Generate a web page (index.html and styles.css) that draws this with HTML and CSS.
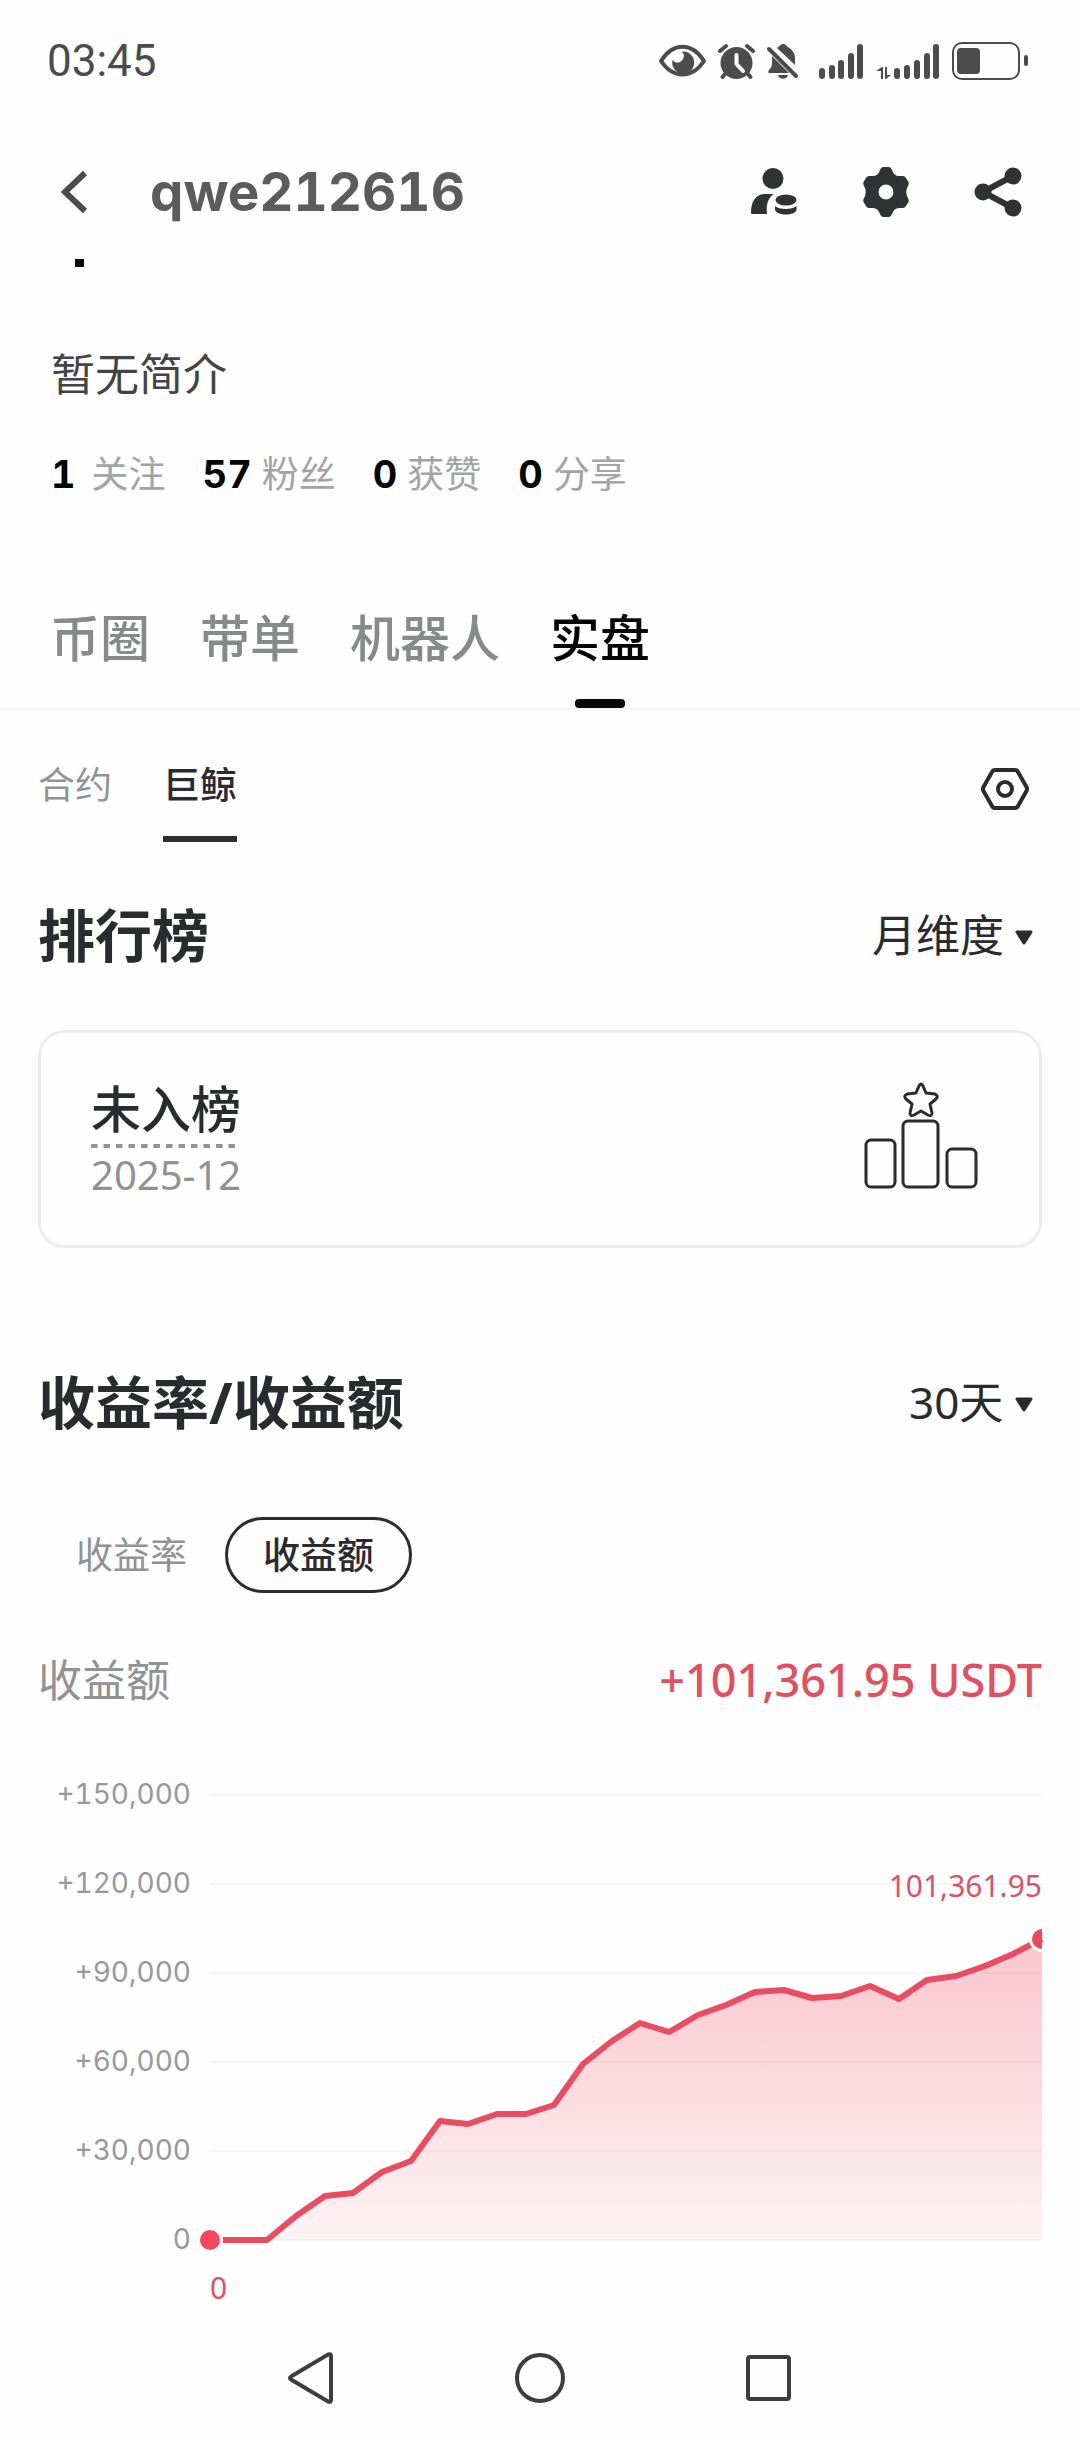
FILE: index.html
```html
<!DOCTYPE html>
<html lang="zh-CN">
<head>
<meta charset="utf-8">
<meta name="viewport" content="width=device-width, initial-scale=1">
<title>qwe212616</title>
<link rel="stylesheet" href="styles.css">
</head>
<body>
<div class="status-bar">
  <time class="clock">03:45</time>
  <div class="status-icons">
    <svg width="47" height="38" viewBox="0 0 47 38" aria-hidden="true">
      <path d="M2 19C14 0 33 0 45 19C33 37 14 37 2 19Z" fill="none" stroke="currentColor" stroke-width="4" stroke-linejoin="round"/>
      <path d="M24 9.500A11 11 0 1 1 13.500 18C16 21 20 21.500 22.500 19C25.500 16 26 12 22.500 10Z" fill="currentColor"/>
    </svg>
    <svg width="37" height="38" viewBox="0 0 37 38" aria-hidden="true">
      <circle cx="18.500" cy="21" r="16" fill="currentColor"/>
      <path d="M2 9L8 4M35 9L29 4" stroke="currentColor" stroke-width="4" stroke-linecap="round"/>
      <path d="M7 32L4.500 35M30 32L32.500 35" stroke="currentColor" stroke-width="4" stroke-linecap="round"/>
      <path d="M18.500 13V22L25 29" fill="none" stroke="#fff" stroke-width="4" stroke-linecap="round" stroke-linejoin="round"/>
    </svg>
    <svg width="32" height="38" viewBox="0 0 32 38" aria-hidden="true">
      <path d="M5 14L22 31H2C1 31 1 29 2 28C4 26 5 24 5 20Z" fill="currentColor"/>
      <path d="M11 5C13 5 13 2 16 2C19 2 19 4 21 5C26 8 28 12 28 16V23L10 6Z" fill="currentColor"/>
      <path d="M2 7L29 34" stroke="currentColor" stroke-width="4" stroke-linecap="round"/>
      <path d="M11 33H21C20 38 12 38 11 33Z" fill="currentColor"/>
    </svg>
    <svg class="signal" width="44" height="38" viewBox="0 0 44 38" aria-hidden="true">
      <path d="M3 29V34M13 26V34M22 21V34M32 14V34M41 5V34" stroke="currentColor" stroke-width="6" stroke-linecap="round"/>
    </svg>
    <svg width="65" height="38" viewBox="0 0 65 38" aria-hidden="true">
      <path d="M6 37V29H1L7 25H8V37ZM10 25V37H11L16 33H12V25Z" fill="currentColor"/>
      <path d="M22 29V34M32 26V34M42 21V34M52 14V34M61 5V34" stroke="currentColor" stroke-width="6" stroke-linecap="round"/>
    </svg>
    <svg width="77" height="40" viewBox="0 0 77 40" aria-hidden="true">
      <rect x="1" y="2" width="66" height="36" rx="9" fill="none" stroke="currentColor" stroke-width="2"/>
      <rect x="5" y="7" width="23" height="26" rx="4" fill="currentColor"/>
      <rect x="72" y="14" width="4" height="11" rx="2" fill="currentColor"/>
    </svg>
  </div>
</div>

<header class="app-header">
  <button class="icon-button" type="button" aria-label="返回">
    <svg width="28" height="44" viewBox="0 0 28 44"><path d="M24 3L4 22L24 41" fill="none" stroke="#4a4b50" stroke-width="6"/></svg>
  </button>
  <h1 class="username">qwe212616</h1>
  <div class="header-actions">
    <button class="icon-button" type="button" aria-label="跟单">
      <svg width="48" height="50" viewBox="0 0 48 50" fill="currentColor">
        <circle cx="23" cy="11.500" r="10.500"/>
        <path d="M24 27C18 31 16 37 17 47H2Q1 47 1 46C1 34 6 27 16 27Z"/>
        <ellipse cx="36" cy="33" rx="10.500" ry="5.500"/>
        <path d="M25 39C29 43 42 43 46.500 39V43C45 49 27 49 25 43Z"/>
      </svg>
    </button>
    <button class="icon-button" type="button" aria-label="设置">
      <svg width="48" height="50" viewBox="0 0 48 50">
        <path fill="currentColor" fill-rule="evenodd" d="M21 0H27Q29 0 30 3Q32 9 37 9H41Q43 9 44 11L46.500 15Q47 16 46.500 18Q42 25 46.500 32Q47 34 46.500 35L44 39Q43 41 41 41H37Q32 41 30 47Q29 50 27 50H21Q19 50 18 47Q16 41 11 41H7Q5 41 4 39L1.500 35Q1 34 1.500 32Q6 25 1.500 18Q1 16 1.500 15L4 11Q5 9 7 9H11Q16 9 18 3Q19 0 21 0ZM24 17.500A7.500 7.500 0 1 0 24 32.500A7.500 7.500 0 1 0 24 17.500Z"/>
      </svg>
    </button>
    <button class="icon-button" type="button" aria-label="分享">
      <svg width="48" height="50" viewBox="0 0 48 50" fill="currentColor">
        <path d="M39 9L9 25L39 41" fill="none" stroke="currentColor" stroke-width="6"/>
        <circle cx="9" cy="25" r="8.500"/><circle cx="39" cy="9" r="8.500"/><circle cx="39" cy="41" r="8.500"/>
      </svg>
    </button>
  </div>
</header>

<main>
  <section class="profile">
    <div class="name-tail"></div>
    <p class="bio">暂无简介</p>
    <div class="stats">
      <a class="stat stat-first" href="#following"><b>1</b><span>关注</span></a>
      <a class="stat" href="#followers"><b>57</b><span>粉丝</span></a>
      <a class="stat" href="#likes"><b>0</b><span>获赞</span></a>
      <a class="stat" href="#shares"><b>0</b><span>分享</span></a>
    </div>
  </section>

  <nav class="tabs">
    <button class="tab" type="button">币圈</button>
    <button class="tab" type="button">带单</button>
    <button class="tab" type="button">机器人</button>
    <button class="tab is-active" type="button">实盘</button>
  </nav>

  <div class="content">
    <div class="subtabs">
      <button class="subtab" type="button">合约</button>
      <button class="subtab is-active" type="button">巨鲸</button>
      <button class="icon-button subtab-settings" type="button" aria-label="显示设置">
        <svg width="50" height="44" viewBox="0 0 50 44" fill="none" stroke="currentColor" stroke-width="4" stroke-linejoin="round">
          <path d="M15 3H35Q37 3 38 5L46.500 20Q47.500 22 46.500 24L38 39Q37 41 35 41H15Q13 41 12 39L3.500 24Q2.500 22 3.500 20L12 5Q13 3 15 3Z"/>
          <circle cx="25" cy="22" r="7"/>
        </svg>
      </button>
    </div>

    <section>
      <div class="section-head">
        <h2>排行榜</h2>
        <label class="picker">
          <select aria-label="榜单周期"><option>月维度</option></select>
          <svg width="18" height="16" viewBox="0 0 18 16" aria-hidden="true"><path d="M2 2H16L9 13Z" fill="currentColor" stroke="currentColor" stroke-width="3" stroke-linejoin="round"/></svg>
        </label>
      </div>
      <div class="rank-card">
        <div class="rank-text">
          <strong>未入榜</strong>
          <svg class="dashes" width="146" height="4" aria-hidden="true"><path d="M0 2H146" stroke="#8f9394" stroke-width="4" stroke-dasharray="6.500 6"/></svg>
          <time>2025-12</time>
        </div>
        <svg width="114" height="112" viewBox="0 0 114 112" fill="none" stroke="#292b2f" stroke-width="3" stroke-linejoin="round" aria-hidden="true">
          <path d="M55 4Q57 0 59 4L62 11L71 12Q75 14 72 17L66 22L68 31Q68 35 64 33L57 29L50 33Q46 35 46 31L48 22L42 17Q39 14 43 12L52 11Z"/>
          <rect x="2" y="58" width="29" height="47" rx="5"/>
          <rect x="39" y="39" width="35" height="66" rx="5"/>
          <rect x="83" y="67" width="29" height="38" rx="5"/>
        </svg>
      </div>
    </section>

    <section class="earnings">
      <div class="section-head">
        <h2>收益率/收益额</h2>
        <label class="picker">
          <select aria-label="统计周期"><option>30天</option></select>
          <svg width="18" height="16" viewBox="0 0 18 16" aria-hidden="true"><path d="M2 2H16L9 13Z" fill="currentColor" stroke="currentColor" stroke-width="3" stroke-linejoin="round"/></svg>
        </label>
      </div>
      <div class="pills">
        <button class="pill" type="button">收益率</button>
        <button class="pill is-active" type="button">收益额</button>
      </div>
      <div class="total">
        <span class="total-label">收益额</span>
        <span class="total-value">+101,361.95 USDT</span>
      </div>
      <div class="chart">
        <div class="axis">
          <span>+150,000</span>
          <span>+120,000</span>
          <span>+90,000</span>
          <span>+60,000</span>
          <span>+30,000</span>
          <span>0</span>
        </div>
        <div class="plot-column">
          <div class="plot">
            <svg class="curve" viewBox="0 0 832 446" preserveAspectRatio="none" aria-hidden="true">
              <defs>
                <linearGradient id="fade" x1="0" y1="0" x2="0" y2="1">
                  <stop offset="0" stop-color="#f0405a" stop-opacity=".3"/>
                  <stop offset="1" stop-color="#f0405a" stop-opacity=".06"/>
                </linearGradient>
              </defs>
              <path fill="url(#fade)" d="M0 446H57L86 422L115 402L143 399L172 378L201 367L230 327L258 330L287 320L316 320L344 311L373 270L402 247L430 229L459 238L488 221L516 211L545 198L574 196L602 204L631 202L660 192L689 205L717 186L746 182L775 172L803 160L832 145V446Z"/>
              <path class="curve-line" d="M12 446H57L86 422L115 402L143 399L172 378L201 367L230 327L258 330L287 320L316 320L344 311L373 270L402 247L430 229L459 238L488 221L516 211L545 198L574 196L602 204L631 202L660 192L689 205L717 186L746 182L775 172L803 160L832 145"/>
            </svg>
            <i class="dot dot-start"></i>
            <i class="dot dot-end"></i>
            <span class="end-label">101,361.95</span>
          </div>
          <span class="start-label">0</span>
        </div>
      </div>
    </section>
  </div>
</main>

<nav class="system-nav">
  <button class="icon-button" type="button" aria-label="后退"><svg width="52" height="52" viewBox="0 0 52 52"><path d="M5 24.500L42 2.500Q45 1.500 45 4V48Q45 50.500 42 49.500L5 27.500Q3 26 5 24.500Z"/></svg></button>
  <button class="icon-button" type="button" aria-label="主页"><svg width="52" height="52" viewBox="0 0 52 52"><circle cx="26" cy="26" r="23"/></svg></button>
  <button class="icon-button" type="button" aria-label="最近任务"><svg width="52" height="52" viewBox="0 0 52 52"><rect x="6" y="5" width="41" height="42" rx="2"/></svg></button>
</nav>
</body>
</html>
```
FILE: styles.css
```css
* { box-sizing: border-box; }

body {
  margin: 0;
  background: #fefefe;
  color: #292b2f;
  font-family: "Noto Sans", "Noto Sans CJK SC", sans-serif;
}

h1, h2, p { margin: 0; }

button, select {
  margin: 0;
  padding: 0;
  border: 0;
  background: none;
  color: inherit;
  font: inherit;
  appearance: none;
}

a { color: inherit; text-decoration: none; }
svg { display: block; flex: none; }
.icon-button { display: flex; }

/* Status bar */
.status-bar {
  display: flex;
  align-items: center;
  justify-content: space-between;
  height: 122px;
  padding: 0 51px 0 47px;
  color: #4c4c4c;
}
.clock { font: 400 44px/60px Roboto, sans-serif; }
.status-icons { display: flex; align-items: center; gap: 12px; }
.signal { margin-left: 8px; }

/* App header */
.app-header {
  display: flex;
  align-items: center;
  height: 136px;
  padding: 4px 58px 0 61px;
  color: #303235;
}
.username {
  margin-left: 61px;
  color: #5c5c5c;
  font: 700 53px/64px Inter, sans-serif;
  font-variant-numeric: tabular-nums;
}
.header-actions { display: flex; gap: 64px; margin-left: auto; }

/* Profile */
.profile { padding: 0 51px; }
.name-tail { width: 9px; height: 8px; margin: 1px 0 0 24px; background: #060606; }
.bio { margin-top: 77px; color: #444; font-size: 44px; line-height: 60px; }
.stats { display: flex; gap: 37px; margin-top: 45px; }
.stat { display: flex; align-items: center; gap: 10px; line-height: 50px; }
.stat-first { gap: 16px; }
.stat b { color: #060606; font: 700 38px/50px Inter, sans-serif; font-variant-numeric: tabular-nums; }
.stat span { color: #a2a4a5; font-size: 37px; }

/* Main tabs */
.tabs {
  display: flex;
  gap: 50px;
  margin-top: 104px;
  padding: 0 50px;
  border-bottom: 2px solid #f4f5f5;
}
.tab {
  position: relative;
  padding-bottom: 35px;
  color: #87898a;
  font-size: 50px;
  font-weight: 500;
  line-height: 70px;
}
.tab.is-active { color: #060606; }
.tab.is-active::after {
  content: "";
  position: absolute;
  bottom: 0;
  left: calc(50% - 25px);
  width: 50px;
  height: 9px;
  border-radius: 4px;
  background: #060606;
}

.content { padding: 0 38px; }

/* Sub tabs */
.subtabs { display: flex; align-items: flex-start; gap: 51px; padding-top: 50px; }
.subtab {
  padding-bottom: 26px;
  border-bottom: 6px solid transparent;
  color: #919496;
  font-size: 37px;
  line-height: 50px;
}
.subtab.is-active { border-color: #2b2d2f; color: #292b2f; font-weight: 500; }
.subtab-settings { margin: 7px 12px 0 auto; }

/* Sections */
.section-head {
  display: flex;
  align-items: center;
  justify-content: space-between;
  padding-top: 58px;
  line-height: 70px;
}
.section-head h2 { font-size: 57px; font-weight: 700; }
.picker { display: flex; align-items: center; gap: 11px; padding-right: 9px; font-size: 44px; }
.picker svg { margin-top: 6px; }
.picker select { height: 70px; line-height: 70px; }

.rank-card {
  display: flex;
  align-items: center;
  justify-content: space-between;
  margin-top: 60px;
  padding: 41px 61px 43px 50px;
  border: 3px solid #ececec;
  border-radius: 26px;
}
.rank-text { display: flex; flex-direction: column; }
.rank-text strong { font-size: 50px; font-weight: 500; line-height: 70px; }
.rank-text time { color: #8f9293; font-size: 40px; line-height: 54px; }

.earnings { padding-top: 61px; }
.pills { display: flex; margin-top: 80px; }
.pill {
  padding: 0 35px;
  border: 3px solid transparent;
  border-radius: 38px;
  color: #8f9394;
  font-size: 37px;
  line-height: 70px;
}
.pill.is-active { border-color: #2a2c2f; color: #292b2f; font-weight: 500; }

.total {
  display: flex;
  justify-content: space-between;
  margin-top: 57px;
  font-size: 44px;
  line-height: 60px;
}
.total-label { color: #8f9394; }
.total-value { color: #e24f63; font-size: 45px; font-weight: 500; }

/* Chart */
.chart { display: flex; gap: 19px; margin-top: 40px; }
.axis {
  display: flex;
  flex-direction: column;
  width: 153px;
  color: #96999b;
  font: 400 28px/89px Inter, sans-serif;
  font-variant-numeric: tabular-nums;
  text-align: right;
}
.plot-column { flex: 1; padding-top: 44px; }
.plot {
  position: relative;
  height: 447px;
  background: repeating-linear-gradient(#f6f6f7 0 2px, transparent 2px 89px);
}
.curve { width: 100%; height: 446px; overflow: visible; }
.curve-line {
  fill: none;
  stroke: #ea4d62;
  stroke-width: 6px;
  stroke-linejoin: round;
  vector-effect: non-scaling-stroke;
}
.dot {
  position: absolute;
  border: 3px solid #fefefe;
  background: #f1485e;
}
.dot-start { left: -13px; bottom: -12px; width: 26px; height: 26px; border-radius: 13px; }
.dot-end { top: 132px; right: 0; width: 13px; height: 26px; border-right: 0; border-radius: 13px 0 0 13px; }
.end-label {
  position: absolute;
  top: 72px;
  right: 0;
  color: #dc5266;
  font-size: 30px;
  line-height: 40px;
}
.start-label {
  display: block;
  margin-top: 27px;
  color: #dc5266;
  font-size: 30px;
  line-height: 40px;
}

/* System navigation */
.system-nav {
  display: flex;
  align-items: center;
  justify-content: center;
  gap: 176px;
  height: 130px;
  padding-top: 10px;
}
.system-nav svg { fill: none; stroke: #3d3d3d; stroke-width: 4px; }
```
